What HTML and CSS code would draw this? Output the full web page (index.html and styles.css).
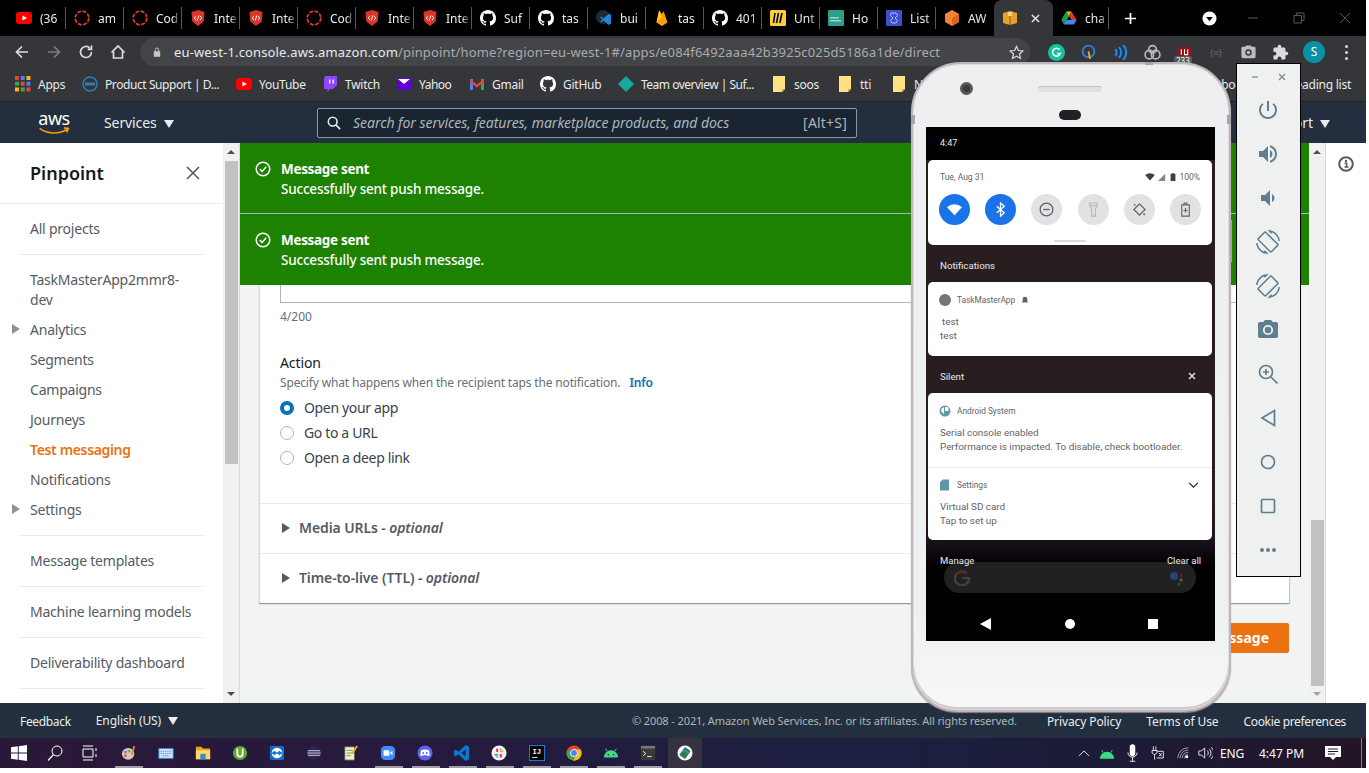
FILE: index.html
```html
<!DOCTYPE html>
<html lang="en">
<head>
    <meta charset="UTF-8">
    <title>Pinpoint - Test messaging</title>
    <link rel="stylesheet" href="styles.css">
</head>
<body>
    <svg class="sprites" width="0" height="0">
        <symbol id="gh" viewBox="0 0 16 16"><path fill="#fff" d="M8 0C3.58 0 0 3.58 0 8c0 3.54 2.29 6.53 5.47 7.59.4.07.55-.17.55-.38 0-.19-.01-.82-.01-1.49-2.01.37-2.53-.49-2.69-.94-.09-.23-.48-.94-.82-1.13-.28-.15-.68-.52-.01-.53.63-.01 1.08.58 1.23.82.72 1.21 1.87.87 2.33.66.07-.52.28-.87.51-1.07-1.78-.2-3.64-.89-3.64-3.95 0-.87.31-1.59.82-2.15-.08-.2-.36-1.02.08-2.12 0 0 .67-.21 2.2.82.64-.18 1.32-.27 2-.27.68 0 1.36.09 2 .27 1.53-1.04 2.2-.82 2.2-.82.44 1.1.16 1.92.08 2.12.51.56.82 1.27.82 2.15 0 3.07-1.87 3.75-3.65 3.95.29.25.54.73.54 1.48 0 1.07-.01 1.93-.01 2.2 0 .21.15.46.55.38A8.013 8.013 0 0016 8c0-4.42-3.58-8-8-8z"/></symbol>
        <symbol id="yt" viewBox="0 0 16 16"><rect y="2" width="16" height="12" rx="3" fill="#f00"/><path fill="#fff" d="M6.4 5.4v5.2L11 8z"/></symbol>
        <symbol id="ring" viewBox="0 0 16 16"><circle cx="8" cy="8" r="6.8" fill="none" stroke="#e8392e" stroke-width="1.7" stroke-dasharray="4 1.4"/></symbol>
        <symbol id="shield" viewBox="0 0 16 16"><path fill="#d9362b" d="M8 0l6.5 2-.8 9.5L8 16l-5.700-4.500L1.500 2z"/><path fill="none" stroke="#fff" stroke-width=".9" d="M6 5.800L4.300 8 6 10.200M10 5.800L11.700 8 10 10.200M8.800 5.500l-1.600 5"/></symbol>
        <symbol id="vsgh" viewBox="0 0 16 16"><circle cx="7" cy="7" r="7" fill="#1f2a33"/><path fill="#1f86d8" d="M15 4.500v9l-2.500 1.500-5-4.500-2.500 2-1-.7L6.500 9.500 4 7.200l1-.7 2.500 2 5-4.500z"/></symbol>
        <symbol id="fire" viewBox="0 0 16 16"><path fill="#ffa000" d="M2.500 12.500L5 1c.3-.6.8-.6 1 0l1.500 3L9 2c.3-.4.700-.3.900.1l3.600 10.400L8 16z"/><path fill="#ffca28" d="M2.500 12.500L5 1l3 5.500L2.500 12.500z"/></symbol>
        <symbol id="miro" viewBox="0 0 16 16"><rect width="16" height="16" rx="1.500" fill="#ffd02f"/><path fill="none" stroke="#050038" stroke-width="1.600" d="M5 3l-1.500 10M8.500 3L6.500 13M12 3L9.800 13"/></symbol>
        <symbol id="teal" viewBox="0 0 16 16"><rect width="16" height="16" rx="1" fill="#2c9c8c"/><rect x="2" y="7" width="9" height="1.500" fill="#9fd8c8"/><rect x="2" y="10" width="11" height="1.500" fill="#9fd8c8"/></symbol>
        <symbol id="blue" viewBox="0 0 16 16"><rect width="16" height="16" rx="1" fill="#3f4fd0"/><path fill="none" stroke="#b8c2f5" d="M5 3h5l1.500 2.500L9 8l2.500 2.500L10 13H6L4.500 10.500 7 8 4.500 5.500z"/></symbol>
        <symbol id="cube" viewBox="0 0 16 16"><path fill="#f58534" d="M8 0l7 4v8l-7 4-7-4V4z"/><path fill="#d9661f" d="M8 8l7-4v8l-7 4z"/></symbol>
        <symbol id="box" viewBox="0 0 16 16"><path fill="#e9a028" d="M1 3l7-2 7 2v10l-7 2-7-2z"/><path fill="#ffd27a" d="M6 2h4v4H6z"/><path fill="#35363a" d="M7.700 6h.6v9h-.6z"/></symbol>
        <symbol id="drive" viewBox="0 0 16 16"><path fill="#fbbc04" d="M5.500 1.500h5l-5 8.500H.500z"/><path fill="#0f9d58" d="M5.500 1.500l-5 8.500L3 14.500 8 6z"/><path fill="#4285f4" d="M3 14.500h10l2.500-4.500H5.500z"/><path fill="#ea4335" d="M10.500 1.500l5 8.500h-5L8 6z" opacity=".9"/></symbol>
        <symbol id="folder" viewBox="0 0 12 16"><path fill="#ffe082" d="M0 0h12v13l-3 3H0z"/><path fill="#c9a94f" d="M9 16v-3h3z"/></symbol>
        <symbol id="rotate" viewBox="0 0 24 24"><path d="M16.480 2.520c3.270 1.550 5.610 4.720 5.970 8.480h1.500C23.440 4.840 18.290 0 12 0l-.66.03 3.810 3.810 1.330-1.320zm-6.250-.77c-.59-.59-1.540-.59-2.120 0L1.750 8.110c-.59.59-.59 1.540 0 2.120l12.020 12.020c.59.59 1.540.59 2.120 0l6.360-6.360c.59-.59.59-1.540 0-2.120L10.230 1.750zm4.600 19.440L2.810 9.170l6.360-6.360 12.020 12.020-6.360 6.360zm-7.310.29C4.250 19.940 1.910 16.760 1.550 13H.05C.56 19.160 5.710 24 12 24l.66-.03-3.810-3.810-1.330 1.320z"/></symbol>
        <symbol id="check" viewBox="0 0 16 16"><circle cx="8" cy="8" r="6.800" fill="none" stroke="#fff" stroke-width="1.500"/><path fill="none" stroke="#fff" stroke-width="1.500" d="M4.800 8l2.300 2.400 4.100-4.600"/></symbol>
    </svg>

    <div class="page">
        <div class="tabstrip">
            <div class="tab"><svg class="fav"><use href="#yt"/></svg><span class="tab-name">(36</span></div>
            <div class="tab"><svg class="fav"><use href="#ring"/></svg><span class="tab-name">am</span></div>
            <div class="tab"><svg class="fav"><use href="#ring"/></svg><span class="tab-name">Cod</span></div>
            <div class="tab"><svg class="fav"><use href="#shield"/></svg><span class="tab-name">Inte</span></div>
            <div class="tab"><svg class="fav"><use href="#shield"/></svg><span class="tab-name">Inte</span></div>
            <div class="tab"><svg class="fav"><use href="#ring"/></svg><span class="tab-name">Cod</span></div>
            <div class="tab"><svg class="fav"><use href="#shield"/></svg><span class="tab-name">Inte</span></div>
            <div class="tab"><svg class="fav"><use href="#shield"/></svg><span class="tab-name">Inte</span></div>
            <div class="tab"><svg class="fav"><use href="#gh"/></svg><span class="tab-name">Suf</span></div>
            <div class="tab"><svg class="fav"><use href="#gh"/></svg><span class="tab-name">tas</span></div>
            <div class="tab"><svg class="fav"><use href="#vsgh"/></svg><span class="tab-name">bui</span></div>
            <div class="tab"><svg class="fav"><use href="#fire"/></svg><span class="tab-name">tas</span></div>
            <div class="tab"><svg class="fav"><use href="#gh"/></svg><span class="tab-name">401</span></div>
            <div class="tab"><svg class="fav"><use href="#miro"/></svg><span class="tab-name">Unt</span></div>
            <div class="tab"><svg class="fav"><use href="#teal"/></svg><span class="tab-name">Ho</span></div>
            <div class="tab"><svg class="fav"><use href="#blue"/></svg><span class="tab-name">List</span></div>
            <div class="tab tab-last"><svg class="fav"><use href="#cube"/></svg><span class="tab-name">AW</span></div>
            <div class="tab-active"><svg class="fav"><use href="#box"/></svg>
                <svg class="tab-close" viewBox="0 0 10 10"><path d="M1 1l8 8M9 1l-8 8"/></svg></div>
            <div class="tab tab-after"><svg class="fav"><use href="#drive"/></svg><span class="tab-name">cha</span></div>
            <svg class="new-tab" viewBox="0 0 14 14"><path d="M7 1v12M1 7h12"/></svg>
            <svg class="tab-search" viewBox="0 0 16 16"><circle cx="8" cy="8" r="7.500" fill="#fff"/><path d="M4.500 6.500h7L8 11z" fill="#000"/></svg>
            <div class="win-btns">
                <svg viewBox="0 0 12 12"><path d="M1 6h10"/></svg>
                <svg viewBox="0 0 12 12"><path d="M1 3.500h7.500V11H1zM3.500 3.500V1H11v7.500H8.500"/></svg>
                <svg viewBox="0 0 12 12"><path d="M1 1l10 10M11 1L1 11"/></svg>
            </div>
        </div>

        <div class="toolbar">
            <svg class="tool" viewBox="0 0 16 16"><path d="M14 8H2.500M8 2.500L2.500 8 8 13.500"/></svg>
            <svg class="tool tool-off" viewBox="0 0 16 16"><path d="M2 8h11.500M8 2.500L13.500 8 8 13.500"/></svg>
            <svg class="tool" viewBox="0 0 16 16"><path d="M13.500 8a5.500 5.500 0 1 1-1.600-3.900M13.500 1.500v3.800H9.700"/></svg>
            <svg class="tool" viewBox="0 0 16 16"><path d="M1.500 8.500L8 2l6.500 6.500M3.500 7.500V14h9V7.500"/></svg>
            <div class="omnibox">
                <svg class="lock" viewBox="0 0 10 12"><path d="M1 5h8v7H1z" fill="#c4c7c5"/><path d="M3 5V3a2 2 0 0 1 4 0v2" fill="none" stroke="#c4c7c5" stroke-width="1.200"/></svg>
                <span class="url"><b>eu-west-1.console.aws.amazon.com</b>/pinpoint/home?region=eu-west-1#/apps/e084f6492aaa42b3925c025d5186a1de/direct</span>
                <svg class="star" viewBox="0 0 16 16"><path d="M8 1.500l2 4.400 4.800.5-3.600 3.200 1 4.700L8 11.900l-4.200 2.400 1-4.700L1.200 6.400 6 5.900z"/></svg>
            </div>
            <div class="extensions">
                <span class="ext"><svg viewBox="0 0 16 16"><circle cx="8" cy="8" r="8" fill="#15c39a"/><path d="M11 5.500A3.700 3.700 0 1 0 11.500 9H8.500" fill="none" stroke="#fff" stroke-width="1.500"/></svg></span>
                <span class="ext"><svg viewBox="0 0 16 16"><circle cx="8" cy="7" r="5.500" fill="none" stroke="#2f7fd6" stroke-width="1.800"/><path d="M8 7l1.500 7" stroke="#f2a81d" stroke-width="1.800"/></svg></span>
                <span class="ext"><svg viewBox="0 0 16 16"><path d="M3 5a4 4 0 0 1 0 6M6.500 3a7 7 0 0 1 0 10M10.500 1a10 10 0 0 1 0 14" fill="none" stroke="#1a8cff" stroke-width="1.800"/></svg></span>
                <span class="ext"><svg viewBox="0 0 16 16"><circle cx="5" cy="10" r="4" fill="none" stroke="#bdbdbd" stroke-width="1.500"/><circle cx="11" cy="10" r="4" fill="none" stroke="#bdbdbd" stroke-width="1.500"/><circle cx="8" cy="5" r="3.500" fill="none" stroke="#bdbdbd" stroke-width="1.500"/></svg></span>
                <span class="ext ext-badged"><svg viewBox="0 0 16 16"><path d="M1 3h14v9H1z" fill="#8c1515"/><path d="M5 5v5M8 5v5h3V5" stroke="#fff" fill="none"/></svg><em class="badge">233</em></span>
                <span class="ext ext-code">{≡}</span>
                <span class="ext"><svg viewBox="0 0 24 24"><path fill="#bdbdbd" d="M9 2 7.200 4H4c-1.100 0-2 .9-2 2v12c0 1.100.9 2 2 2h16c1.100 0 2-.9 2-2V6c0-1.100-.9-2-2-2h-3.200L15 2H9z"/><circle cx="12" cy="12" r="4.500" fill="#35363a"/><circle cx="12" cy="12" r="2.500" fill="#bdbdbd"/></svg></span>
                <span class="ext"><svg viewBox="0 0 24 24"><path fill="#dadce0" d="M20.500 11H19V7c0-1.100-.9-2-2-2h-4V3.500a2.500 2.500 0 0 0-5 0V5H4c-1.100 0-2 .9-2 2v3.800h1.500a2.700 2.700 0 0 1 0 5.400H2V20c0 1.100.9 2 2 2h3.800v-1.500a2.700 2.700 0 0 1 5.400 0V22H17c1.100 0 2-.9 2-2v-4h1.500a2.500 2.500 0 0 0 0-5z"/></svg></span>
                <span class="avatar">S</span>
                <span class="kebab"><i></i><i></i><i></i></span>
            </div>
        </div>

        <div class="bookmarks">
            <span class="bm bm-apps"><svg class="bm-icon" viewBox="0 0 14 14"><path fill="#ea4335" d="M0 0h3.500v3.500H0z"/><path fill="#4285f4" d="M5 0h3.500v3.500H5z"/><path fill="#fbbc04" d="M10 0h3.500v3.500H10z"/><path fill="#34a853" d="M0 5h3.500v3.500H0z"/><path fill="#ea4335" d="M5 5h3.500v3.500H5z"/><path fill="#4285f4" d="M10 5h3.500v3.500H10z"/><path fill="#fbbc04" d="M0 10h3.500v3.500H0z"/><path fill="#34a853" d="M5 10h3.500v3.500H5z"/><path fill="#ea4335" d="M10 10h3.500v3.500H10z"/></svg>Apps</span>
            <span class="bm bm-dell"><svg class="bm-icon" viewBox="0 0 16 16"><circle cx="8" cy="8" r="7" fill="none" stroke="#2a7fb8" stroke-width="1.500"/><path d="M3 8h10" stroke="#2a7fb8" stroke-width="3"/></svg>Product Support | D...</span>
            <span class="bm bm-yt"><svg class="bm-icon"><use href="#yt"/></svg>YouTube</span>
            <span class="bm bm-tw"><svg class="bm-icon" viewBox="0 0 16 16"><path fill="#9146ff" d="M3 0h12v9l-4 4H8l-2.500 3v-3H2V3z"/><path fill="#fff" d="M7 3.500h1.300v4H7zM10.500 3.500h1.300v4h-1.300z"/></svg>Twitch</span>
            <span class="bm bm-ya"><svg class="bm-icon" viewBox="0 0 16 16"><path fill="#6001d2" d="M1 2h14v12H1z"/><path fill="#fff" d="M2 3h12L8 8z"/></svg>Yahoo</span>
            <span class="bm bm-gm"><svg class="bm-icon" viewBox="0 0 16 16"><path fill="#4285f4" d="M1 3h3v11H1z"/><path fill="#34a853" d="M12 3h3v11h-3z"/><path fill="#ea4335" d="M1 3l7 5.500L15 3v3L8 11.500 1 6z"/></svg>Gmail</span>
            <span class="bm bm-gh"><svg class="bm-icon"><use href="#gh"/></svg>GitHub</span>
            <span class="bm bm-team"><svg class="bm-icon" viewBox="0 0 16 16"><path fill="#14a99a" d="M8 0l8 8-8 8-8-8z"/></svg>Team overview | Suf...</span>
            <span class="bm bm-soos"><svg class="bm-folder"><use href="#folder"/></svg>soos</span>
            <span class="bm bm-tti"><svg class="bm-folder"><use href="#folder"/></svg>tti</span>
            <span class="bm bm-n"><svg class="bm-folder"><use href="#folder"/></svg>New</span>
            <span class="bm-right">Other bookmarks</span>
            <span class="bm-reading">Reading list</span>
        </div>

        <div class="aws-nav">
            <div class="aws-logo">
                <span class="aws-word">aws</span>
                <svg viewBox="0 0 34 10"><path d="M1 1.500c9 6.500 22 7 31 .5M28 1l5 .5-2 4.500" fill="none" stroke="#f90" stroke-width="1.800"/></svg>
            </div>
            <span class="nav-services">Services<i class="caret"></i></span>
            <div class="nav-search">
                <svg viewBox="0 0 16 16"><circle cx="6.500" cy="6.500" r="5" fill="none" stroke="#eaeded" stroke-width="1.800"/><path d="M10 10l5 5" stroke="#eaeded" stroke-width="2"/></svg>
                <span class="nav-search-text">Search for services, features, marketplace products, and docs</span>
                <span class="nav-search-key">[Alt+S]</span>
            </div>
            <span class="nav-support">Support<i class="caret"></i></span>
        </div>

        <div class="workspace">
            <aside class="sidenav">
                <div class="sidenav-head">
                    <span class="sidenav-title">Pinpoint</span>
                    <svg viewBox="0 0 14 14"><path d="M1 1l12 12M13 1L1 13"/></svg>
                </div>
                <div class="nav-group">
                    <a class="nav-item">All projects</a>
                </div>
                <div class="nav-group">
                    <a class="nav-item nav-project">TaskMasterApp2mmr8-dev</a>
                    <a class="nav-item nav-expand">Analytics</a>
                    <a class="nav-item">Segments</a>
                    <a class="nav-item">Campaigns</a>
                    <a class="nav-item">Journeys</a>
                    <a class="nav-item nav-current">Test messaging</a>
                    <a class="nav-item">Notifications</a>
                    <a class="nav-item nav-expand">Settings</a>
                </div>
                <div class="nav-group"><a class="nav-item">Message templates</a></div>
                <div class="nav-group"><a class="nav-item">Machine learning models</a></div>
                <div class="nav-group"><a class="nav-item">Deliverability dashboard</a></div>
            </aside>
            <div class="scrollbar scrollbar-side"><i class="sb-up"></i><i class="sb-thumb"></i><i class="sb-down"></i></div>

            <main class="content">
                <div class="flash">
                    <svg><use href="#check"/></svg>
                    <div><strong>Message sent</strong><p>Successfully sent push message.</p></div>
                </div>
                <div class="flash">
                    <svg><use href="#check"/></svg>
                    <div><strong>Message sent</strong><p>Successfully sent push message.</p></div>
                </div>
                <section class="card">
                    <div class="card-body">
                        <div class="input-stub"></div>
                        <div class="counter">4/200</div>
                        <div class="field-label">Action</div>
                        <div class="field-hint">Specify what happens when the recipient taps the notification.<a class="info-link">Info</a></div>
                        <label class="radio radio-on"><i></i>Open your app</label>
                        <label class="radio"><i></i>Go to a URL</label>
                        <label class="radio"><i></i>Open a deep link</label>
                    </div>
                    <div class="expander"><i></i><span>Media URLs - <em>optional</em></span></div>
                    <div class="expander"><i></i><span>Time-to-live (TTL) - <em>optional</em></span></div>
                </section>
                <div class="actions"><button class="send-btn">Send message</button></div>
            </main>
            <div class="scrollbar scrollbar-main"><i class="sb-up"></i><i class="sb-thumb"></i><i class="sb-down"></i></div>

            <aside class="tools-rail">
                <svg viewBox="0 0 16 16"><circle cx="8" cy="8" r="6.800" fill="none" stroke="#545b64" stroke-width="2"/><circle cx="8" cy="4.900" r="1.200" fill="#545b64"/><path d="M6.500 7.200H8.600v3.600M6.500 11h4" fill="none" stroke="#545b64" stroke-width="1.600"/></svg>
            </aside>
        </div>

        <footer class="console-foot">
            <span class="foot-link foot-tight">Feedback</span>
            <span class="foot-lang">English (US)<i class="caret"></i></span>
            <span class="foot-copy">© 2008 - 2021, Amazon Web Services, Inc. or its affiliates. All rights reserved.</span>
            <span class="foot-link">Privacy Policy</span>
            <span class="foot-link">Terms of Use</span>
            <span class="foot-link foot-tight">Cookie preferences</span>
        </footer>

        <div class="taskbar">
            <span class="task task-start"><svg viewBox="0 0 16 16"><path fill="#fff" d="M0 2.300l6.800-1v6.300H0zM7.700 1.200L16 0v7.600H7.700zM0 8.400h6.800v6.300l-6.800-1zM7.700 8.400H16V16l-8.300-1.200z"/></svg></span>
            <span class="task task-search"><svg viewBox="0 0 16 16"><circle cx="10" cy="6" r="5" fill="none" stroke="#fff"/><path d="M6.500 9.500L1 15.500" stroke="#fff" stroke-width="1.200"/></svg></span>
            <span class="task task-view"><svg viewBox="0 0 16 16"><path fill="none" stroke="#fff" d="M1 4h10v8H1zM1 1h10M1 15h10M14 3v3M14 9v3"/></svg></span>
            <span class="task task-on"><svg viewBox="0 0 18 18"><ellipse cx="8" cy="10" rx="7" ry="6.500" fill="#d8c7b5"/><circle cx="5" cy="8" r="1.500" fill="#3f88d8"/><circle cx="9" cy="7" r="1.500" fill="#5cb85c"/><circle cx="5" cy="12" r="1.500" fill="#d9534f"/><path d="M15 1l-3 10" stroke="#e58a2c" stroke-width="2"/></svg></span>
            <span class="task"><svg viewBox="0 0 18 18"><rect x="1" y="4" width="16" height="11" fill="#cfe4f7" stroke="#3b8bd9"/><path d="M3 7h12M3 9.500h12M5 12h8" stroke="#3b8bd9" stroke-dasharray="1.500 1"/></svg></span>
            <span class="task"><svg viewBox="0 0 18 18"><path fill="#e9a81c" d="M1 2h6l2 2h8v12H1z"/><path fill="#ffd66b" d="M1 6h16v10H1z"/><path fill="#2f8fd9" d="M6 10h6v6H6z"/></svg></span>
            <span class="task"><svg viewBox="0 0 18 18"><circle cx="9" cy="9" r="8" fill="#5fa82e"/><path d="M6 4v6a3 3 0 0 0 6 0V4" fill="none" stroke="#fff" stroke-width="2"/></svg></span>
            <span class="task"><svg viewBox="0 0 18 18"><rect x="1" y="1" width="16" height="16" rx="2" fill="#0e6fd1"/><circle cx="9" cy="9" r="6" fill="#fff"/><path d="M4 9h10M7 7L4 9l3 2M11 7l3 2-3 2" stroke="#0e6fd1" stroke-width="1.500" fill="#0e6fd1"/></svg></span>
            <span class="task"><svg viewBox="0 0 18 18"><circle cx="9" cy="9" r="8" fill="#2c2255"/><path d="M2 6.500h14M1.500 9h15M2 11.500h14" stroke="#d7d2e8" stroke-width="1.300"/></svg></span>
            <span class="task"><svg viewBox="0 0 18 18"><path fill="#f5f1d0" stroke="#555" d="M2 2h11v15H2z"/><path d="M4 6h7M4 9h7M4 12h5" stroke="#5a9a3a"/><path d="M16 1l-6 9" stroke="#e8b02a" stroke-width="2"/></svg></span>
            <span class="task task-on"><svg viewBox="0 0 18 18"><rect x="1" y="1" width="16" height="16" rx="5" fill="#3d8bff"/><path fill="#fff" d="M4 6h6.500v6H4zM11.500 8.500L14 6.500v5l-2.500-2z"/></svg></span>
            <span class="task task-on"><svg viewBox="0 0 18 18"><circle cx="9" cy="9" r="8.500" fill="#5865f2"/><path fill="#fff" d="M4.500 6c2.500-1.300 6.500-1.300 9 0l1 5.500c-1 .8-2 1-2.500 1l-.6-1H6.600l-.6 1c-.5 0-1.500-.2-2.500-1z"/><circle cx="7" cy="9" r="1" fill="#5865f2"/><circle cx="11" cy="9" r="1" fill="#5865f2"/></svg></span>
            <span class="task task-on"><svg viewBox="0 0 18 18"><path fill="#0a78d1" d="M13 0l4 2v14l-4 2-8-7.500L2 13l-2-1.500V6.500L2 5l3 2.500zM13 5L8.500 9l4.500 4z"/></svg></span>
            <span class="task task-on"><svg viewBox="0 0 18 18"><circle cx="9" cy="9" r="8.500" fill="#f4f1ee"/><path d="M7 4v4M11 10v4" stroke="#e01e5a" stroke-width="2"/><path d="M4 11h4" stroke="#2eb67d" stroke-width="2"/><path d="M10 7h4" stroke="#ecb22e" stroke-width="2"/><path d="M11 4v2M7 12v2" stroke="#36c5f0" stroke-width="2"/></svg></span>
            <span class="task task-on"><svg viewBox="0 0 18 18"><rect width="18" height="18" fill="#000" stroke="#1e88e5" stroke-width="2"/><text x="4" y="10" class="ij-mark">IJ</text><path d="M3.500 14h6" stroke="#fff"/></svg></span>
            <span class="task task-on"><svg viewBox="0 0 18 18"><circle cx="9" cy="9" r="8.500" fill="#ea4335"/><path d="M9 9L1.500 5.500A8.500 8.500 0 0 0 8 17.500z" fill="#34a853"/><path d="M9 5h7.500A8.500 8.500 0 0 1 8 17.500L12 10z" fill="#fbbc04"/><circle cx="9" cy="9" r="4" fill="#4285f4" stroke="#fff"/></svg></span>
            <span class="task task-on"><svg viewBox="0 0 18 18"><path fill="#3ddc84" d="M1 14a8 8 0 0 1 16 0z"/><path d="M4.500 7L3 4M13.500 7L15 4" stroke="#3ddc84"/><circle cx="6" cy="11" r=".8" fill="#111"/><circle cx="12" cy="11" r=".8" fill="#111"/></svg></span>
            <span class="task task-on"><svg viewBox="0 0 18 18"><rect x="1" y="1" width="16" height="16" fill="#3a3a3a"/><rect x="1" y="1" width="16" height="3" fill="#777"/><path d="M3.500 7l3 2.500-3 2.500M8 13h5" stroke="#fff" fill="none"/></svg></span>
            <span class="task task-active"><svg viewBox="0 0 18 18"><circle cx="9" cy="9" r="8.500" fill="#f5f5f5"/><rect x="5" y="3.500" width="8" height="11" rx="1" transform="rotate(35 9 9)" fill="#2e7d52"/><path d="M5.500 8a4 4 0 0 1 7 2" stroke="#4a90d9" fill="none" stroke-width="1.500"/></svg></span>

            <div class="tray">
                <svg class="tray-caret" viewBox="0 0 14 8"><path d="M1 7l6-6 6 6"/></svg>
                <svg class="tray-android" viewBox="0 0 18 12"><path fill="#3ddc84" d="M1 12a8 8 0 0 1 16 0z"/><path d="M4.500 5L3 2M13.500 5L15 2" stroke="#3ddc84"/></svg>
                <svg class="tray-mic" viewBox="0 0 12 20"><rect x="3" y="0" width="6" height="13" rx="3" fill="#fff"/><path d="M1 9a5 5 0 0 0 10 0M6 14v4M3 18.500h6" fill="none" stroke="#fff"/></svg>
                <svg class="tray-power" viewBox="0 0 18 16"><path d="M4 0v5M7 0v5M2.500 5h6v3l-3 2-3-2zM5.500 10v6M8.500 6H16v8H8" fill="none" stroke="#fff"/><path d="M11 8l3 4M14 8l-3 4" stroke="#fff"/></svg>
                <svg class="tray-wifi" viewBox="0 0 16 16"><path d="M1 15A14 14 0 0 1 15 1M4 15A11 11 0 0 1 15 4M7 15a8 8 0 0 1 8-8M10 15a5 5 0 0 1 5-5" fill="none" stroke="#c8c8c8"/><circle cx="13" cy="13" r="2" fill="#fff"/></svg>
                <svg class="tray-vol" viewBox="0 0 18 16"><path d="M1 5.500h3L8 2v12L4 10.500H1z M11 5a4 4 0 0 1 0 6M13.500 3a7 7 0 0 1 0 10M16 1a10 10 0 0 1 0 14" fill="none" stroke="#fff"/></svg>
                <span class="tray-lang">ENG</span>
                <span class="tray-time">4:47 PM</span>
                <svg class="tray-notif" viewBox="0 0 16 16"><path fill="#fff" d="M0 1h16v11h-5l-3 3-3-3H0z"/><path d="M3 4h10M3 6.500h10M3 9h7" stroke="#1c1830"/></svg>
                <i class="show-desktop"></i>
            </div>
        </div>

        <!-- emulator window + its side panel float over the browser -->
        <div class="phone">
            <i class="phone-nub nub-top"></i>
            <i class="phone-nub nub-left"></i>
            <i class="phone-nub nub-right"></i>
            <i class="phone-nub nub-power"></i>
            <div class="phone-top">
                <i class="cam"></i><i class="speaker"></i><i class="sensor"></i>
            </div>
            <div class="screen">
                <div class="status-bar">4:47</div>
                <div class="qs-card">
                    <div class="qs-head">
                        <span>Tue, Aug 31</span>
                        <span class="qs-status">
                            <svg viewBox="0 0 12 10"><path fill="#3c4043" d="M0 2.500a9 9 0 0 1 12 0L6 9.500z"/></svg>
                            <svg viewBox="0 0 10 10"><path fill="#80868b" d="M9 1v9H0z"/></svg>
                            <svg class="qs-batt" viewBox="0 0 6 10"><path fill="#3c4043" d="M2 0h2v1h2v9H0V1h2z"/></svg>
                            100%
                        </span>
                    </div>
                    <div class="qs-row">
                        <span class="qs-btn qs-on"><svg viewBox="0 0 16 14"><path fill="#fff" d="M0 4.500a12 12 0 0 1 16 0L8 13z"/></svg></span>
                        <span class="qs-btn qs-on"><svg viewBox="0 0 12 16"><path fill="none" stroke="#fff" stroke-width="1.400" d="M2 4.500l8 7L6 15V1l4 3.500-8 7"/></svg></span>
                        <span class="qs-btn"><svg viewBox="0 0 16 16"><circle cx="8" cy="8" r="6.800" fill="none" stroke="#5f6368" stroke-width="1.400"/><path d="M4.500 8h7" stroke="#5f6368" stroke-width="1.400"/></svg></span>
                        <span class="qs-btn"><svg viewBox="0 0 12 16"><path fill="none" stroke="#b5b7ba" stroke-width="1.200" d="M2 1h8v3l-2 3v8H4V7L2 4zM2 4h8"/></svg></span>
                        <span class="qs-btn"><svg viewBox="0 0 16 16"><path fill="none" stroke="#5f6368" stroke-width="1.300" d="M8 2l6 6-6 6-6-6z"/><circle cx="3" cy="3" r="1" fill="#5f6368"/><circle cx="13" cy="13" r="1" fill="#5f6368"/></svg></span>
                        <span class="qs-btn"><svg viewBox="0 0 10 16"><path fill="none" stroke="#5f6368" stroke-width="1.200" d="M1 3h8v12H1zM3.500 3V1h3v2M5 6.500v5M2.800 9h4.400"/></svg></span>
                    </div>
                    <i class="qs-handle"></i>
                </div>

                <div class="shade-label">Notifications</div>
                <div class="note-card note-task">
                    <div class="note-head"><i class="note-dot"></i>TaskMasterApp<svg class="note-bell" viewBox="0 0 10 10"><path fill="#5f6368" d="M5 1a3 3 0 0 1 3 3v3l1 1H1l1-1V4a3 3 0 0 1 3-3z"/></svg></div>
                    <p class="note-title">test</p>
                    <p>test</p>
                </div>
                <div class="shade-label shade-silent">Silent<svg viewBox="0 0 10 10"><path d="M2 2l6 6M8 2L2 8"/></svg></div>
                <div class="note-card note-silent">
                    <div class="note-part">
                        <div class="note-head"><svg class="note-sys" viewBox="0 0 12 12"><circle cx="6" cy="6" r="5.500" fill="#5e97a8"/><path fill="#fff" d="M6 2h3.500v4H6zM2 6a4 4 0 0 1 3-3.800V9z"/></svg>Android System</div>
                        <p>Serial console enabled</p>
                        <p>Performance is impacted. To disable, check bootloader.</p>
                    </div>
                    <div class="note-part note-settings">
                        <div class="note-head"><svg class="note-sd" viewBox="0 0 10 12"><path fill="#5e97a8" d="M3 0h7v12H0V3z"/></svg>Settings<svg class="note-more" viewBox="0 0 12 8"><path d="M1 1l5 5 5-5"/></svg></div>
                        <p>Virtual SD card</p>
                        <p>Tap to set up</p>
                    </div>
                </div>
                <div class="shade-foot"><span>Manage</span><span>Clear all</span></div>
                <div class="home-search">
                    <svg class="g-mark" viewBox="0 0 16 16"><path d="M13 3.500A7 7 0 1 0 15 8H8.500" fill="none" stroke="#3d4a38" stroke-width="2.200"/><path d="M2.500 4A7 7 0 0 1 13 3.500" fill="none" stroke="#5c2a26" stroke-width="2.200"/></svg>
                    <svg class="g-dots" viewBox="0 0 16 16"><circle cx="6" cy="6" r="4" fill="#24427c"/><circle cx="13" cy="5" r="1.500" fill="#6e1f1a"/><circle cx="13" cy="10" r="1.500" fill="#7a6414"/><circle cx="11" cy="14" r="1.500" fill="#1b5a2c"/></svg>
                </div>
                <div class="soft-nav">
                    <svg viewBox="0 0 12 12"><path d="M11 0v12L0 6z"/></svg>
                    <svg viewBox="0 0 12 12"><circle cx="6" cy="6" r="5"/></svg>
                    <svg viewBox="0 0 12 12"><path d="M1 1h10v10H1z"/></svg>
                </div>
            </div>
        </div>

        <div class="emu-panel">
            <div class="emu-head">
                <svg viewBox="0 0 10 10"><path d="M2 5h6"/></svg>
                <svg viewBox="0 0 10 10"><path d="M2 2l6 6M8 2L2 8"/></svg>
            </div>
            <svg class="emu-icon" viewBox="0 0 24 24"><path d="M13 3h-2v10h2V3zm4.830 2.170l-1.420 1.420C17.990 7.860 19 9.810 19 12c0 3.870-3.130 7-7 7s-7-3.130-7-7c0-2.190 1.010-4.140 2.580-5.420L6.170 5.170C4.230 6.820 3 9.260 3 12c0 4.970 4.030 9 9 9s9-4.030 9-9c0-2.740-1.230-5.180-3.170-6.830z"/></svg>
            <svg class="emu-icon" viewBox="0 0 24 24"><path d="M3 9v6h4l5 5V4L7 9H3zm13.500 3c0-1.770-1.020-3.290-2.500-4.030v8.050c1.480-.73 2.500-2.250 2.500-4.020zM14 3.230v2.060c2.890.86 5 3.540 5 6.710s-2.110 5.850-5 6.710v2.060c4.010-.91 7-4.490 7-8.770s-2.990-7.860-7-8.770z"/></svg>
            <svg class="emu-icon" viewBox="0 0 24 24"><path d="M18.500 12c0-1.770-1.020-3.290-2.500-4.030v8.050c1.480-.72 2.500-2.240 2.500-4.020zM5 9v6h4l5 5V4L9 9H5z"/></svg>
            <svg class="emu-icon"><use href="#rotate"/></svg>
            <svg class="emu-icon emu-flip"><use href="#rotate"/></svg>
            <svg class="emu-icon" viewBox="0 0 24 24"><path d="M9 2 7.170 4H4c-1.100 0-2 .9-2 2v12c0 1.100.9 2 2 2h16c1.100 0 2-.9 2-2V6c0-1.100-.9-2-2-2h-3.170L15 2H9z"/><circle cx="12" cy="12" r="4.200" fill="none" stroke="#eff0f0" stroke-width="1.800"/></svg>
            <svg class="emu-icon emu-line" viewBox="0 0 24 24"><circle cx="10" cy="10" r="6.500"/><path d="M15 15l6.500 6.500M10 7v6M7 10h6"/></svg>
            <svg class="emu-icon emu-line" viewBox="0 0 24 24"><path d="M18.500 4.500v15L6 12z"/></svg>
            <svg class="emu-icon emu-line" viewBox="0 0 24 24"><circle cx="12" cy="12" r="6.500"/></svg>
            <svg class="emu-icon emu-line" viewBox="0 0 24 24"><rect x="5.500" y="5.500" width="13" height="13" rx="1"/></svg>
            <svg class="emu-icon" viewBox="0 0 24 24"><circle cx="6" cy="12" r="2"/><circle cx="12" cy="12" r="2"/><circle cx="18" cy="12" r="2"/></svg>
        </div>
    </div>
</body>
</html>
```

FILE: styles.css
```css
* {
    box-sizing: border-box;
}
html, body {
    margin: 0;
    background: #fff;
}
.sprites {
    position: absolute;
}
.page {
    position: relative;
    width: 1366px;
    height: 768px;
    overflow: hidden;
    display: flex;
    flex-direction: column;
    font-family: "Noto Sans", "Open Sans", sans-serif;
}

/* browser chrome */
.tabstrip {
    height: 36px;
    flex: none;
    background: #000;
    display: flex;
    align-items: center;
    padding-left: 8px;
    color: #e8eaed;
}
.tab {
    width: 58px;
    flex: none;
    height: 22px;
    display: flex;
    align-items: center;
    padding-left: 8px;
    border-right: 1px solid #55585c;
}
.tab-last {
    border-right: 0;
}
.tab-after {
    border-right: 1px solid #55585c;
    width: 56px;
}
.fav {
    width: 16px;
    height: 16px;
    flex: none;
}
.tab-name {
    margin-left: 8px;
    width: 25px;
    overflow: hidden;
    white-space: nowrap;
    font-size: 12px;
    -webkit-mask-image: linear-gradient(90deg, #000 65%, transparent);
    mask-image: linear-gradient(90deg, #000 65%, transparent);
}
.tab-active {
    width: 59px;
    flex: none;
    height: 36px;
    margin-top: 0;
    background: #35363a;
    border-radius: 8px 8px 0 0;
    display: flex;
    align-items: center;
    padding-left: 8px;
}
.tab-close {
    width: 9px;
    height: 9px;
    margin-left: 13px;
    stroke: #e8eaed;
    stroke-width: 1.6;
    fill: none;
}
.new-tab {
    width: 13px;
    height: 13px;
    margin-left: 15px;
    stroke: #fff;
    stroke-width: 1.8;
    fill: none;
}
.tab-search {
    width: 15px;
    height: 15px;
    margin-left: 65px;
}
.win-btns {
    display: flex;
    align-items: center;
    gap: 34px;
    margin-left: 30px;
}
.win-btns svg {
    width: 12px;
    height: 12px;
    fill: none;
    stroke: #55585c;
}
.toolbar {
    height: 34px;
    flex: none;
    background: #35363a;
    display: flex;
    align-items: center;
    padding: 0 0 2px 14px;
}
.tool {
    width: 16px;
    height: 16px;
    margin-right: 16px;
    fill: none;
    stroke: #dadce0;
    stroke-width: 1.7;
    flex: none;
}
.tool-off {
    stroke: #7c7e82;
}
.omnibox {
    width: 890px;
    margin-left: -2px;
    height: 28px;
    flex: none;
    border-radius: 14px;
    background: #434447;
    display: flex;
    align-items: center;
    padding-left: 13px;
}
.lock {
    width: 8px;
    height: 12px;
    flex: none;
}
.url {
    margin-left: 13px;
    font-size: 13px;
    letter-spacing: .15px;
    color: #a8abaf;
    white-space: nowrap;
    flex: 1;
}
.url b {
    font-weight: 400;
    color: #e8eaed;
}
.star {
    width: 15px;
    height: 15px;
    margin-right: 6px;
    flex: none;
    fill: none;
    stroke: #dadce0;
    stroke-width: 1.3;
}
.extensions {
    display: flex;
    align-items: center;
    margin-left: 10px;
}
.ext {
    width: 32px;
    display: flex;
    justify-content: center;
    position: relative;
}
.ext svg {
    width: 17px;
    height: 17px;
}
.ext-code {
    font-size: 9px;
    color: #6a6c70;
}
.badge {
    position: absolute;
    top: 12px;
    left: 6px;
    background: #55585c;
    color: #fff;
    font-size: 8px;
    font-style: normal;
    line-height: 10px;
    padding: 0 2px;
    border-radius: 2px;
}
.avatar {
    width: 22px;
    height: 22px;
    margin-left: 7px;
    border-radius: 50%;
    background: #0892a5;
    color: #fff;
    font-size: 12px;
    text-align: center;
    line-height: 22px;
}
.kebab {
    margin-left: 20px;
    display: flex;
    flex-direction: column;
    gap: 3px;
}
.kebab i {
    width: 3px;
    height: 3px;
    border-radius: 50%;
    background: #dadce0;
}
.bookmarks {
    height: 32px;
    flex: none;
    background: #35363a;
    border-bottom: 1px solid #202124;
    display: flex;
    align-items: center;
    padding: 0 0 3px 15px;
    color: #e8eaed;
    font-size: 12px;
    letter-spacing: -.25px;
    white-space: nowrap;
    position: relative;
}
.bm {
    display: flex;
    align-items: center;
    flex: none;
}
.bm-icon {
    width: 16px;
    height: 16px;
    margin-right: 7px;
    flex: none;
}
.bm-folder {
    width: 12px;
    height: 16px;
    margin-right: 9px;
    flex: none;
}
.bm-apps { width: 65px; }
.bm-dell {
    width: 156px;
    padding-left: 2px;
    letter-spacing: -.42px;
}
.bm-yt { width: 86px; }
.bm-tw { width: 74px; }
.bm-ya {
    width: 73px;
    letter-spacing: -.5px;
}
.bm-gm { width: 71px; }
.bm-gh { width: 78px; }
.bm-team {
    width: 155px;
    letter-spacing: -.5px;
}
.bm-soos { width: 66px; }
.bm-tti { width: 54px; }
.bm-right {
    margin-left: auto;
    margin-right: 6px;
}
.bm-reading {
    margin-right: 15px;
}

/* aws console */
.aws-nav {
    height: 41px;
    flex: none;
    background: #232f3e;
    display: flex;
    align-items: center;
    color: #eaeded;
    font-size: 14px;
    padding-left: 37px;
}
.aws-logo {
    width: 34px;
    height: 26px;
    flex: none;
    display: flex;
    flex-direction: column;
    align-items: center;
}
.aws-word {
    font-size: 18px;
    line-height: 17px;
    color: #fff;
    letter-spacing: -.5px;
}
.aws-logo svg {
    width: 34px;
    height: 9px;
}
.nav-services {
    margin-left: 33px;
    width: 213px;
    letter-spacing: -.1px;
}
.caret {
    display: inline-block;
    margin-left: 7px;
    border-left: 5.5px solid transparent;
    border-right: 5.5px solid transparent;
    border-top: 8px solid #eaeded;
}
.nav-search {
    width: 540px;
    height: 30px;
    flex: none;
    background: #1b2531;
    border: 1px solid #8d9aa5;
    border-radius: 2px;
    display: flex;
    align-items: center;
    padding: 0 9px 0 9px;
}
.nav-search svg {
    width: 14px;
    height: 14px;
    flex: none;
}
.nav-search-text {
    margin-left: 12px;
    font-style: italic;
    font-size: 14px;
    letter-spacing: -.04px;
    color: #aab7b8;
    flex: 1;
    white-space: nowrap;
}
.nav-search-key {
    color: #aab7b8;
    font-size: 14px;
    letter-spacing: .2px;
}
.nav-support {
    margin-left: auto;
    margin-right: 36px;
}
.workspace {
    height: 560px;
    flex: none;
    display: flex;
    background: #fff;
}
.sidenav {
    width: 223px;
    flex: none;
    overflow: hidden;
    font-size: 14px;
    letter-spacing: -.22px;
    color: #545b64;
}
.sidenav-head {
    height: 61px;
    display: flex;
    align-items: center;
    justify-content: space-between;
    padding: 0 23px 0 30px;
    border-bottom: 1px solid #eaeded;
}
.sidenav-head svg {
    width: 14px;
    height: 14px;
    fill: none;
    stroke: #545b64;
    stroke-width: 1.6;
}
.sidenav-title {
    font-size: 18px;
    font-weight: 600;
    letter-spacing: 0;
    color: #16191f;
}
.nav-group {
    margin: 0 19px;
    padding: 10px 0;
    border-bottom: 1px solid #eaeded;
}
.nav-item {
    display: block;
    position: relative;
    padding: 5px 0 5px 11px;
    line-height: 20px;
    white-space: nowrap;
}
.nav-project {
    white-space: normal;
    width: 165px;
}
.nav-current {
    color: #ec7211;
    font-weight: 600;
    letter-spacing: -.35px;
}
.nav-expand::before {
    content: "";
    position: absolute;
    left: -7px;
    top: 9px;
    border-top: 5.5px solid transparent;
    border-bottom: 5.5px solid transparent;
    border-left: 8px solid #879596;
}
.scrollbar {
    width: 16px;
    flex: none;
    background: #f1f1f1;
    position: relative;
}
.sb-up, .sb-down {
    position: absolute;
    left: 4px;
    border-left: 4px solid transparent;
    border-right: 4px solid transparent;
}
.sb-up {
    top: 7px;
    border-bottom: 4px solid #505050;
}
.sb-down {
    bottom: 7px;
    border-top: 4px solid #505050;
}
.sb-thumb {
    position: absolute;
    left: 2px;
    width: 13px;
    background: #c1c1c1;
}
.scrollbar-side .sb-thumb {
    top: 18px;
    height: 303px;
}
.scrollbar-main .sb-thumb {
    top: 377px;
    height: 166px;
}
.scrollbar-main .sb-down {
    border-top-color: #a3a3a3;
}
.content {
    width: 1070px;
    flex: none;
    background: #f2f3f3;
    border-left: 1px solid #d5dbdb;
    overflow: hidden;
}
.flash {
    height: 71px;
    background: #1d8102;
    border-bottom: 1px solid #aab7b8;
    color: #fff;
    display: flex;
    padding: 16px 0 0 16px;
    margin-left: -1px;
    font-size: 13.5px;
    letter-spacing: -.2px;
    line-height: 20px;
}
.flash + .flash {
    height: 71px;
    border-bottom: 0;
}
.flash svg {
    width: 16px;
    height: 16px;
    margin: 2px 10px 0 0;
    flex: none;
}
.flash strong {
    display: block;
    font-weight: 700;
    letter-spacing: -.32px;
}
.flash p {
    margin: 0;
    font-weight: 500;
}
.card {
    margin: 0 20px 0 19px;
    background: #fff;
    border-left: 1px solid #d5dbdb;
    box-shadow: 0 1px 1px 0 rgba(0, 28, 36, .3), 1px 1px 1px 0 rgba(0, 28, 36, .15);
    color: #16191f;
    font-size: 14px;
}
.card-body {
    height: 218px;
    padding: 0 20px;
}
.input-stub {
    height: 18px;
    border: 1px solid #aab7b8;
    border-top: 0;
}
.counter {
    margin-top: 6px;
    font-size: 12px;
    line-height: 16px;
    color: #687078;
}
.field-label {
    margin-top: 28px;
    line-height: 20px;
    letter-spacing: -.1px;
    color: #16191f;
}
.field-hint {
    margin-top: 2px;
    font-size: 12px;
    letter-spacing: -.16px;
    line-height: 16px;
    color: #687078;
    margin-bottom: 4px;
}
.info-link {
    margin-left: 9px;
    color: #0073bb;
    font-weight: 600;
}
.radio {
    display: flex;
    align-items: center;
    height: 25px;
    letter-spacing: -.35px;
    color: #3b4249;
}
.radio i {
    width: 14px;
    height: 14px;
    margin-right: 10px;
    border-radius: 50%;
    border: 1px solid #aab7b8;
    background: #fff;
}
.radio-on i {
    border: 4px solid #0073bb;
}
.expander {
    height: 50px;
    border-top: 1px solid #eaeded;
    display: flex;
    align-items: center;
    padding: 0 0 2px 22px;
    font-weight: 600;
    letter-spacing: -.1px;
    color: #545b64;
}
.expander i {
    border-top: 5.5px solid transparent;
    border-bottom: 5.5px solid transparent;
    border-left: 8px solid #545b64;
    margin-right: 9px;
}
.actions {
    display: flex;
    justify-content: flex-end;
    margin: 20px 20px 0 0;
}
.send-btn {
    height: 30px;
    padding: 0 20px 2px;
    border: 0;
    border-radius: 2px;
    background: #ec7211;
    color: #fff;
    font-family: inherit;
    font-size: 14px;
    font-weight: 700;
}
.tools-rail {
    flex: 1;
    border-left: 1px solid #d5dbdb;
    display: flex;
    justify-content: center;
    padding-top: 13px;
}
.tools-rail svg {
    width: 16px;
    height: 16px;
}
.console-foot {
    height: 35px;
    flex: none;
    background: #232f3e;
    display: flex;
    align-items: center;
    color: #eaeded;
    font-size: 12px;
    letter-spacing: -.1px;
    padding: 2px 20px 0;
    white-space: nowrap;
}
.foot-tight {
    letter-spacing: -.33px;
}
.foot-lang {
    margin-left: 25px;
    margin-top: -3px;
}
.foot-copy {
    margin-left: auto;
    margin-right: 30px;
    margin-top: -3px;
    font-size: 11px;
    color: #aab7b8;
}
.foot-link + .foot-link {
    margin-left: 25px;
}
.taskbar {
    height: 30px;
    flex: none;
    background: linear-gradient(90deg, #2a1838, #261a3e 30%, #1b2040 65%, #1d1a35 85%, #231526);
    display: flex;
    align-items: stretch;
}
.task {
    width: 37.100px;
    flex: none;
    display: flex;
    align-items: center;
    justify-content: center;
    position: relative;
}
.task svg {
    width: 16px;
    height: 16px;
}
.task-start {
    width: 37px;
}
.task-search {
    width: 36px;
}
.task-view {
    width: 34px;
    margin-right: 3px;
}
.task-on::after {
    content: "";
    position: absolute;
    left: 5px;
    right: 4px;
    bottom: 0;
    height: 2px;
    background: #a19fa6;
}
.task-active {
    width: 34px;
    margin-left: 2px;
    background: #37323f;
}
.ij-mark {
    font-family: "Liberation Mono", monospace;
    font-size: 8px;
    font-weight: 700;
    fill: #fff;
}
.tray {
    margin-left: auto;
    display: flex;
    align-items: center;
    color: #fff;
    font-size: 12px;
    letter-spacing: -.2px;
    white-space: nowrap;
}
.tray svg {
    flex: none;
}
.tray-caret {
    width: 12px;
    height: 7px;
    fill: none;
    stroke: #fff;
}
.tray-android {
    width: 16px;
    height: 11px;
    margin-left: 9px;
}
.tray-mic {
    width: 11px;
    height: 19px;
    margin-left: 12px;
}
.tray-power {
    width: 15px;
    height: 14px;
    margin-left: 12px;
}
.tray-wifi {
    width: 12px;
    height: 12px;
    margin-left: 12px;
}
.tray-vol {
    width: 15px;
    height: 14px;
    margin-left: 9px;
}
.tray-lang {
    margin-left: 7px;
    width: 36px;
}
.tray-time {
    width: 46px;
    margin-left: 3px;
    letter-spacing: 0;
}
.tray-notif {
    width: 16px;
    height: 16px;
    margin: 0 20px 0 20px;
}
.show-desktop {
    width: 5px;
    align-self: stretch;
    border-left: 1px solid #85848c;
}

/* emulator */
.phone {
    position: absolute;
    left: 911px;
    top: 62px;
    width: 320px;
    height: 650px;
    border: 2px solid #bfb6ba;
    border-radius: 50px 50px 46px 46px;
    background: linear-gradient(#eeeff1, #eff0f2 85%, #f7f7f9);
    box-shadow: inset 0 0 0 1px #e0dcde, inset 0 -2px 0 1px #cfc9cc, 0 1px 1px #8b8487;
    padding: 0 14px 0 13px;
}
.phone-nub {
    position: absolute;
    background: #a8a4a7;
}
.nub-top {
    left: 232px;
    top: -2px;
    width: 8px;
    height: 3px;
}
.nub-left {
    left: -2px;
    top: 51px;
    width: 4px;
    height: 9px;
}
.nub-right {
    right: -2px;
    top: 51px;
    width: 4px;
    height: 9px;
}
.nub-power {
    right: -3px;
    top: 156px;
    width: 2px;
    height: 42px;
}
.phone-top {
    height: 63px;
    position: relative;
}
.cam {
    position: absolute;
    left: 34px;
    top: 18px;
    width: 13px;
    height: 13px;
    border-radius: 50%;
    background: #3b3b3d;
    border: 3px solid #56575a;
}
.speaker {
    position: absolute;
    left: 112px;
    top: 22px;
    width: 64px;
    height: 6px;
    border-radius: 3px;
    background: #dfe0e2;
    border-top: 1px solid #bfc0c3;
}
.sensor {
    position: absolute;
    left: 133px;
    top: 46px;
    width: 22px;
    height: 10px;
    border-radius: 5px;
    background: #202124;
}
.screen {
    width: 289px;
    height: 514px;
    position: relative;
    background: linear-gradient(#000 33px, #281e1f 33px, #281e20 380px, #1d1420 410px, #000 440px);
    font-family: Roboto, "Noto Sans", sans-serif;
    color: #e8eaed;
    overflow: hidden;
    display: flex;
    flex-direction: column;
}
.status-bar {
    height: 33px;
    padding: 9px 0 0 14px;
    font-size: 9px;
    line-height: 14px;
    color: #e8eaed;
}
.qs-card, .note-card {
    width: 284px;
    margin-left: 2px;
    background: #fff;
    border-radius: 5px;
    color: #5f6368;
    font-size: 9.850px;
    flex: none;
}
.qs-card {
    height: 85px;
    padding: 10px 12px 0 12px;
    position: relative;
}
.qs-head {
    display: flex;
    justify-content: space-between;
    align-items: center;
    line-height: 14px;
    font-size: 8.500px;
}
.qs-status {
    display: flex;
    align-items: center;
    gap: 2px;
}
.qs-status svg {
    width: 10px;
    height: 8px;
}
.qs-status .qs-batt {
    width: 6px;
    margin: 0 1px 0 1px;
}
.qs-row {
    display: flex;
    justify-content: space-between;
    margin: 10px -1px 0 -1px;
}
.qs-btn {
    width: 31px;
    height: 31px;
    border-radius: 50%;
    background: #e1e2e3;
    display: flex;
    align-items: center;
    justify-content: center;
}
.qs-on {
    background: #1a73e8;
}
.qs-btn svg {
    width: 15px;
    height: 15px;
}
.qs-handle {
    position: absolute;
    left: 126px;
    bottom: 3px;
    width: 32px;
    height: 2px;
    background: #dadce0;
}
.shade-label {
    height: 37px;
    flex: none;
    padding: 3px 14px 0;
    display: flex;
    align-items: center;
    justify-content: space-between;
    font-size: 9.700px;
    color: #e8eaed;
}
.shade-silent svg {
    width: 10px;
    height: 10px;
    margin-right: 4px;
    stroke: #e8eaed;
    stroke-width: 1.300;
}
.note-card p {
    margin: 0;
    padding-left: 12px;
    line-height: 13.500px;
}
.note-task {
    height: 74px;
    padding-top: 12px;
}
.note-task .note-title {
    padding-left: 14px;
}
.note-head {
    display: flex;
    align-items: center;
    height: 12px;
    font-size: 8.300px;
    padding-left: 29px;
    position: relative;
    margin-bottom: 9px;
}
.note-dot, .note-sys, .note-sd {
    position: absolute;
    left: 11px;
    top: 0;
    width: 12px;
    height: 12px;
}
.note-dot {
    border-radius: 50%;
    background: #757575;
}
.note-bell {
    width: 8px;
    height: 8px;
    margin-left: 6px;
}
.note-silent {
    height: 147px;
}
.note-part {
    padding-top: 12px;
    height: 74px;
}
.note-settings {
    height: 73px;
    padding-top: 11px;
    border-top: 1px solid #eceded;
}
.note-more {
    width: 11px;
    height: 7px;
    margin-left: auto;
    margin-right: 13px;
    fill: none;
    stroke: #202124;
    stroke-width: 1.300;
}
.note-sd {
    width: 9px;
    left: 12px;
}
.shade-foot {
    display: flex;
    justify-content: space-between;
    padding: 0 14px;
    margin-top: 11px;
    line-height: 20px;
    font-size: 9.500px;
    color: #e8eaed;
    position: relative;
    z-index: 1;
}
.home-search {
    position: absolute;
    left: 18px;
    top: 435px;
    width: 252px;
    height: 31px;
    border-radius: 16px;
    background: #212121;
    padding-left: 10px;
    display: flex;
    align-items: center;
    justify-content: space-between;
    padding-right: 12px;
}
.g-mark {
    width: 16px;
    height: 16px;
}
.g-dots {
    width: 16px;
    height: 16px;
}
.soft-nav {
    position: absolute;
    left: 54px;
    top: 491px;
    width: 179px;
    display: flex;
    justify-content: space-between;
}
.soft-nav svg {
    width: 12px;
    height: 12px;
    fill: #fff;
}
.emu-panel {
    position: absolute;
    left: 1236px;
    top: 63px;
    width: 65px;
    height: 514px;
    background: #eff0f0;
    border: 1px solid #000;
    display: flex;
    flex-direction: column;
    align-items: center;
}
.emu-head {
    width: 100%;
    height: 24px;
    flex: none;
    display: flex;
    align-items: center;
    justify-content: space-between;
    padding: 2px 13px 0 13px;
    margin-bottom: 10px;
}
.emu-head svg {
    width: 10px;
    height: 10px;
    fill: none;
    stroke: #6d8c9b;
    stroke-width: 1.200;
}
.emu-icon {
    width: 24px;
    height: 24px;
    flex: none;
    margin: 0 1px 20px 0;
    fill: #5f7f8f;
}
.emu-flip {
    transform: scaleX(-1);
}
.emu-line {
    fill: none;
    stroke: #5f7f8f;
    stroke-width: 1.700;
}
```
